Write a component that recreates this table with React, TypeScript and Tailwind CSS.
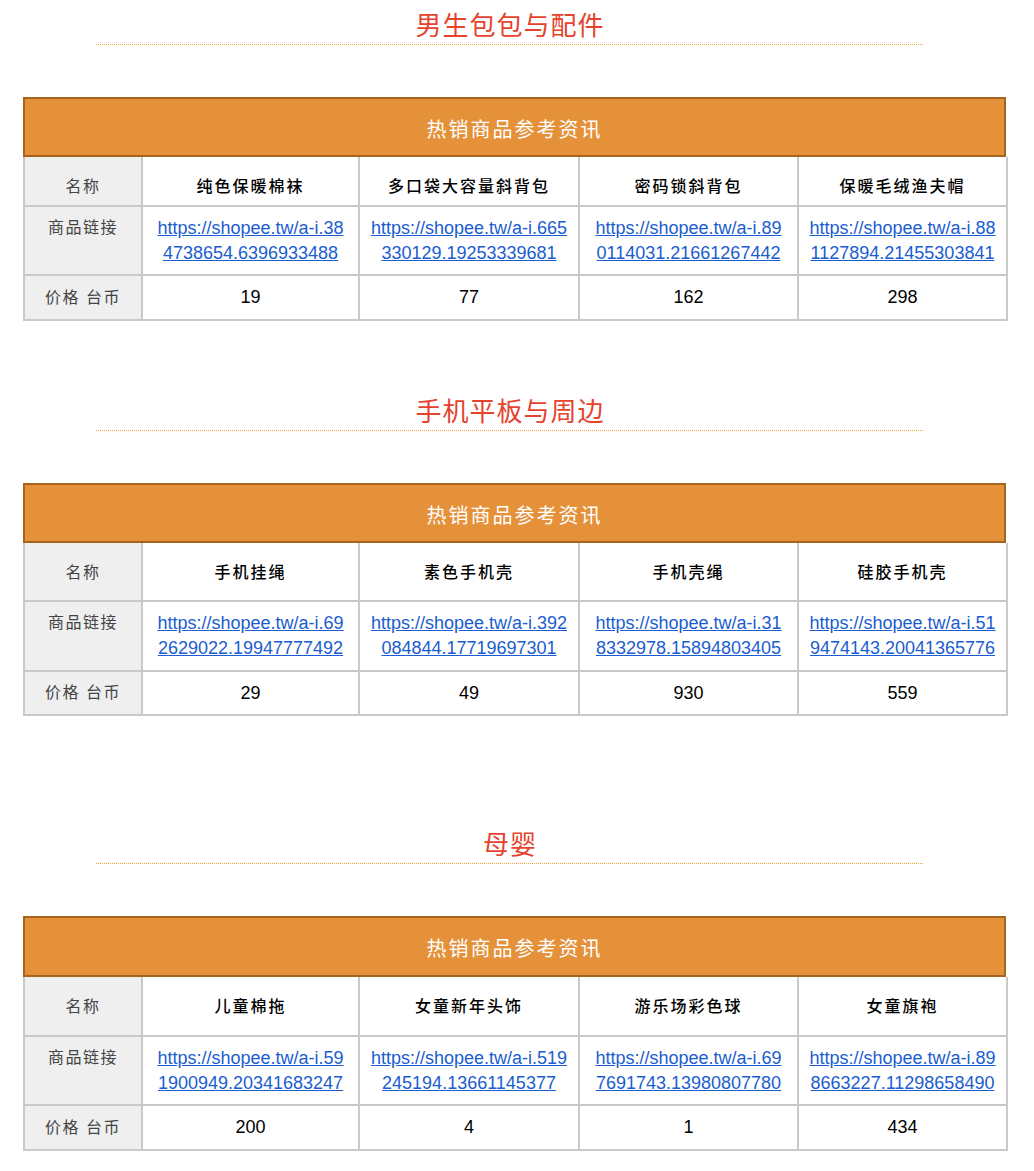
import React from "react";

type Section = {
  title: string;
  mt: string;
  namePad: string;
  rowH: [string, string, string, string];
  names: string[];
  links: [string, string][];
  prices: string[];
};

const sections: Section[] = [
  {
    title: "男生包包与配件",
    mt: "mt-0",
    namePad: "pt-[11px]",
    rowH: ["h-[60px]", "h-[50px]", "h-[69px]", "h-[45px]"],
    names: ["纯色保暖棉袜", "多口袋大容量斜背包", "密码锁斜背包", "保暖毛绒渔夫帽"],
    links: [
      ["https://shopee.tw/a-i.38", "4738654.6396933488"],
      ["https://shopee.tw/a-i.665", "330129.19253339681"],
      ["https://shopee.tw/a-i.89", "0114031.21661267442"],
      ["https://shopee.tw/a-i.88", "1127894.21455303841"],
    ],
    prices: ["19", "77", "162", "298"],
  },
  {
    title: "手机平板与周边",
    mt: "mt-[65px]",
    namePad: "pt-[2px]",
    rowH: ["h-[60px]", "h-[59px]", "h-[70px]", "h-[44px]"],
    names: ["手机挂绳", "素色手机壳", "手机壳绳", "硅胶手机壳"],
    links: [
      ["https://shopee.tw/a-i.69", "2629022.19947777492"],
      ["https://shopee.tw/a-i.392", "084844.17719697301"],
      ["https://shopee.tw/a-i.31", "8332978.15894803405"],
      ["https://shopee.tw/a-i.51", "9474143.20041365776"],
    ],
    prices: ["29", "49", "930", "559"],
  },
  {
    title: "母婴",
    mt: "mt-[103px]",
    namePad: "pt-[2px]",
    rowH: ["h-[61px]", "h-[60px]", "h-[69px]", "h-[45px]"],
    names: ["儿童棉拖", "女童新年头饰", "游乐场彩色球", "女童旗袍"],
    links: [
      ["https://shopee.tw/a-i.59", "1900949.20341683247"],
      ["https://shopee.tw/a-i.519", "245194.13661145377"],
      ["https://shopee.tw/a-i.69", "7691743.13980807780"],
      ["https://shopee.tw/a-i.89", "8663227.11298658490"],
    ],
    prices: ["200", "4", "1", "434"],
  },
];

const cell = "border-r-2 border-b-2 border-[#c9c9c9]";

function Block({ s }: { s: Section }) {
  return (
    <div className={s.mt}>
      <div className="ml-[96px] w-[828px]">
        <div className="pt-[9px] h-[44px] text-center text-[26px] leading-[34px] tracking-[1px] text-[#e5432e]">
          {s.title}
        </div>
        <div className="h-px bg-[linear-gradient(90deg,#f2a33a_50%,transparent_50%)] bg-[length:2px_1px] bg-repeat-x" />
      </div>
      <div className="ml-[23px] mt-[52px] w-[983px]">
        <div
          className={`${s.rowH[0]} flex items-center justify-center pt-[5px] bg-[#e5913a] border-2 border-[#a5651f] text-white text-[20px] tracking-[2px]`}
        >
          热销商品参考资讯
        </div>
        <div className="grid grid-cols-[118px_217px_220px_219px_209px] border-l-2 border-[#c9c9c9]">
          <div className={`${cell} ${s.rowH[1]} ${s.namePad} bg-[#efefef] flex items-center justify-center text-[16px] tracking-[1.5px] text-[#444]`}>
            名称
          </div>
          {s.names.map((n, i) => (
            <div
              key={i}
              className={`${cell} ${s.rowH[1]} ${s.namePad} flex items-center justify-center text-[16px] tracking-[2px] text-black font-medium`}
            >
              {n}
            </div>
          ))}
          <div className={`${cell} ${s.rowH[2]} bg-[#efefef] pt-[9px] text-center text-[16px] leading-[24px] tracking-[1.5px] text-[#444]`}>
            商品链接
          </div>
          {s.links.map((l, i) => (
            <div
              key={i}
              className={`${cell} ${s.rowH[2]} pt-[9px] text-center text-[18px] leading-[25px]`}
            >
              <a href="#" className="text-[#1a5dd0] underline">
                {l[0]}
                <br />
                {l[1]}
              </a>
            </div>
          ))}
          <div className={`${cell} ${s.rowH[3]} bg-[#efefef] flex items-center justify-center text-[16px] tracking-[1.5px] text-[#444]`}>
            价格 台币
          </div>
          {s.prices.map((p, i) => (
            <div
              key={i}
              className={`${cell} ${s.rowH[3]} flex items-center justify-center text-[18px] text-black`}
            >
              {p}
            </div>
          ))}
        </div>
      </div>
    </div>
  );
}

export default function App() {
  return (
    <div
      className="w-[1034px] min-h-[1171px] bg-white"
      style={{ fontFamily: '"Liberation Sans", "Noto Sans CJK SC", sans-serif' }}
    >
      {sections.map((s, i) => (
        <Block key={i} s={s} />
      ))}
    </div>
  );
}
